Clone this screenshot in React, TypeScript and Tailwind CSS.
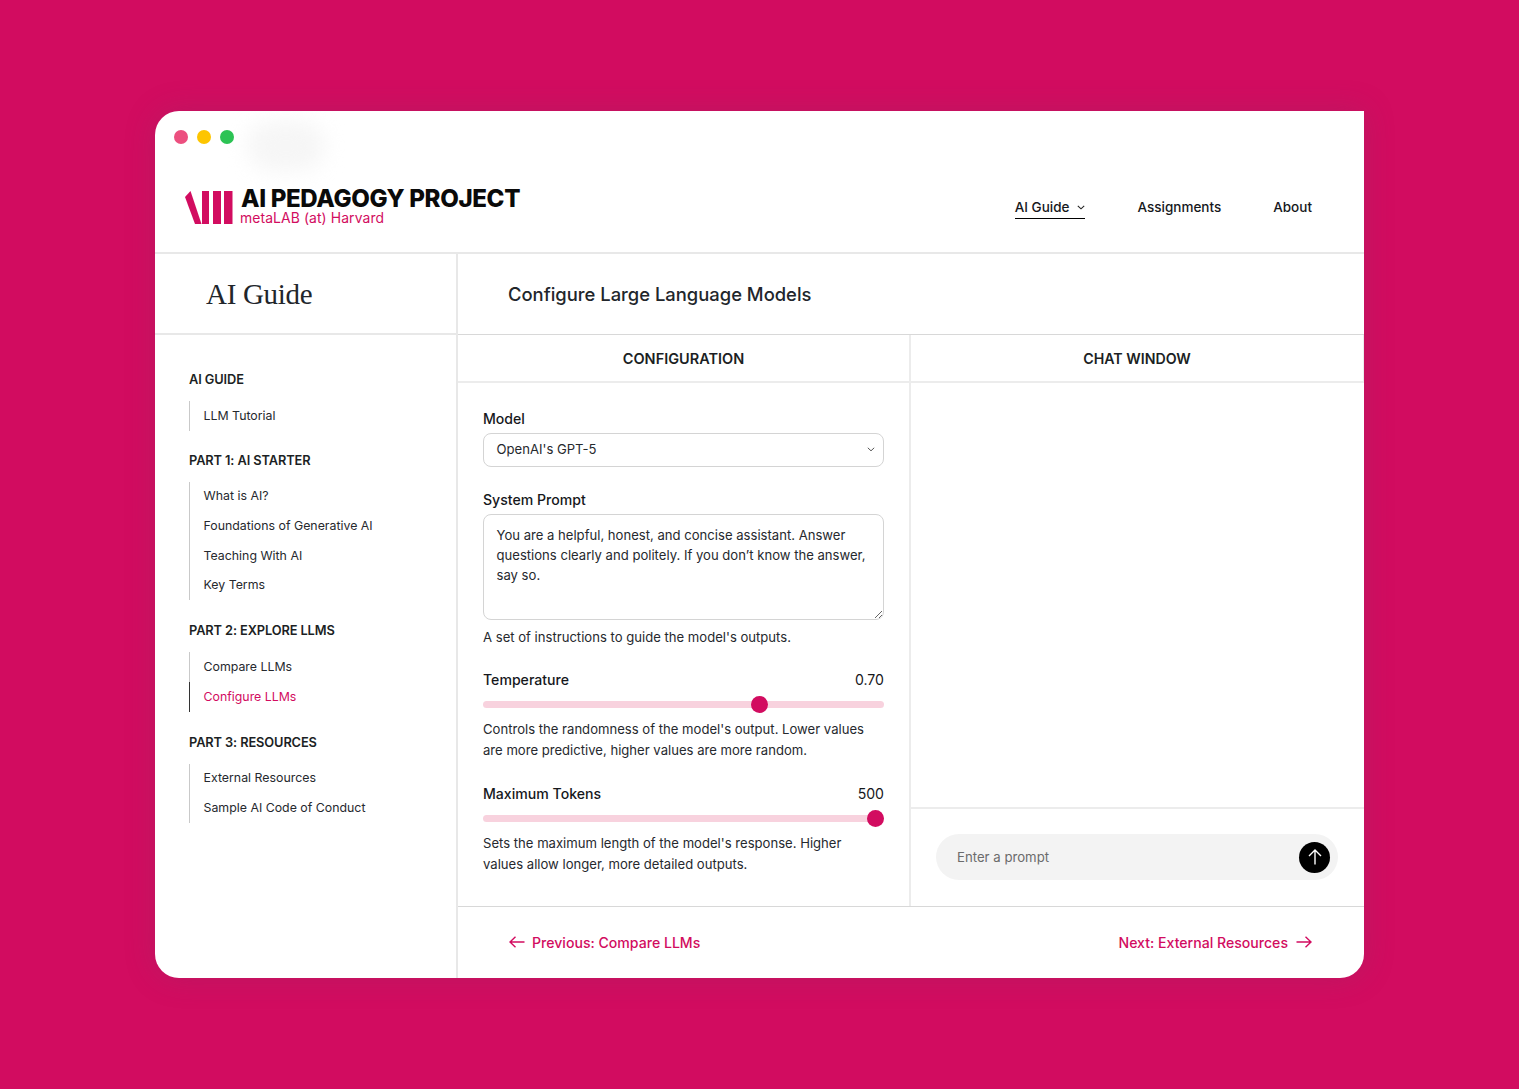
const font = "[font-family:Inter,'Liberation_Sans',sans-serif]";

function Logo() {
  return (
    <svg width="48" height="33" viewBox="0 0 48 33" className="shrink-0">
      <path d="M0 6 L5.5 0 L16.5 33 L10 33 Z" fill="#d20c60" />
      <rect x="17" y="0" width="7" height="33" fill="#d20c60" />
      <rect x="28" y="0" width="8" height="33" fill="#d20c60" />
      <rect x="39" y="0" width="8.5" height="33" fill="#d20c60" />
    </svg>
  );
}

function Group({ title, items, active, className }: { title: string; items: string[]; active?: string; className?: string }) {
  return (
    <div className={className}>
      <div className="text-[12.8px] leading-[16px] font-semibold text-[#1c1f24] tracking-[-0.1px]">{title}</div>
      <div className="mt-[13px] border-l border-[#c9c9c9] relative">
        {items.map((item) => (
          <div
            key={item}
            className={`h-[29.67px] flex items-center pl-[13.5px] text-[12.35px] ${item === active ? "text-[#d20c60] border-l border-[#333] -ml-px" : "text-[#26292e]"}`}
          >
            {item}
          </div>
        ))}
      </div>
    </div>
  );
}

function Slider({ label, value, percent, help, className }: { label: string; value: string; percent: number; help: string[]; className?: string }) {
  return (
    <div className={className}>
      <div className="flex justify-between text-[14.1px] leading-[20px] font-medium text-[#16181c]">
        <span>{label}</span>
        <span className="font-normal">{value}</span>
      </div>
      <div className="relative mt-[11px] h-[7px] rounded-full bg-[#f8d2de]">
        <div
          className="absolute top-[-5.5px] w-[17px] h-[17px] rounded-full bg-[#d20c60]"
          style={{ left: `calc(${percent}% - ${(17 * percent) / 100}px)` }}
        />
      </div>
      <div className="mt-[11px] text-[13.1px] leading-[21px] text-[#26292e]">
        {help.map((line) => (
          <div key={line} className="whitespace-nowrap">{line}</div>
        ))}
      </div>
    </div>
  );
}

export default function App() {
  return (
    <div className={`h-[1089px] w-full bg-[#d20c60] pt-[111px] pl-[155px] ${font}`}>
      <div className="relative w-[1209px] h-[867px] bg-white rounded-tl-[24px] rounded-b-[24px] overflow-hidden flex flex-col shadow-[0_0_30px_rgba(120,60,100,0.25)]">
        <div className="absolute left-[92px] top-[10px] w-[78px] h-[50px] rounded-full bg-[#f6f6f6] blur-[10px]" />
        <div className="absolute left-[19px] top-[19px] flex gap-[9px]">
          <div className="w-[14px] h-[14px] rounded-full bg-[#ec4f7f]" />
          <div className="w-[14px] h-[14px] rounded-full bg-[#fdc500]" />
          <div className="w-[14px] h-[14px] rounded-full bg-[#2cc354]" />
        </div>

        <header className="relative h-[143px] shrink-0 border-b-2 border-[#e8e8e8] flex items-start pt-[80px] pl-[30px] pr-[52px]">
          <Logo />
          <div className="ml-[8px] -mt-[3px]">
            <div className="text-[24.1px] leading-[22px] font-extrabold text-[#0a0a0a] tracking-[-0.35px] whitespace-nowrap">AI PEDAGOGY PROJECT</div>
            <div className="-ml-px mt-[1px] text-[13.9px] leading-[14px] text-[#d20c60] tracking-[0.1px] whitespace-nowrap">metaLAB (at) Harvard</div>
          </div>
          <nav className="ml-auto flex items-start gap-[52px] text-[13.5px] font-medium text-[#16181c] mt-[5px]">
            <div className="flex items-center gap-[8px] h-[23px] border-b border-black">
              AI Guide
              <svg width="8" height="5" viewBox="0 0 8 5" fill="none" stroke="#222" strokeWidth="1.1"><path d="M0.8 0.8 L4 3.8 L7.2 0.8" /></svg>
            </div>
            <div className="h-[23px] flex items-center pb-[1px]">Assignments</div>
            <div className="h-[23px] flex items-center pb-[1px]">About</div>
          </nav>
        </header>

        <div className="flex-1 flex min-h-0">
          <aside className="w-[303px] shrink-0 border-r-2 border-[#e8e8e8] flex flex-col">
            <div className="h-[81px] shrink-0 border-b-2 border-[#e8e8e8] flex items-center pl-[51px] pt-[2px] [font-family:'Liberation_Serif',serif] text-[29px] tracking-[-0.3px] text-[#22262b]">
              AI Guide
            </div>
            <div className="pl-[34px] pt-[37px]">
              <Group title="AI GUIDE" items={["LLM Tutorial"]} />
              <Group className="mt-[22px]" title="PART 1: AI STARTER" items={["What is AI?", "Foundations of Generative AI", "Teaching With AI", "Key Terms"]} />
              <Group className="mt-[23px]" title="PART 2: EXPLORE LLMS" items={["Compare LLMs", "Configure LLMs"]} active="Configure LLMs" />
              <Group className="mt-[23px]" title="PART 3: RESOURCES" items={["External Resources", "Sample AI Code of Conduct"]} />
            </div>
          </aside>

          <main className="flex-1 min-w-0 flex flex-col">
            <div className="h-[81px] shrink-0 border-b border-[#d8d8d8] flex items-center pl-[50px] pt-[1px] text-[18.4px] font-medium text-[#22262b]">
              Configure Large Language Models
            </div>
            <div className="flex-1 min-h-0 flex">
              <section className="w-[453px] shrink-0 border-r-2 border-[#ececec] flex flex-col">
                <div className="h-[48px] shrink-0 border-b-2 border-[#ececec] flex items-center justify-center pt-[1px] text-[14.5px] font-semibold text-[#1c1f24]">CONFIGURATION</div>
                <div className="px-[25px] pt-[26px]">
                  <div className="text-[14.1px] leading-[20px] font-medium text-[#16181c]">Model</div>
                  <div className="mt-[4px] h-[34px] rounded-[8px] border border-[#d4d4d4] flex items-center justify-between pl-[12.5px] pr-[8px] pb-[1px] text-[13.1px] text-[#26292e]">
                    OpenAI's GPT-5
                    <svg width="8" height="5" viewBox="0 0 8 5" fill="none" stroke="#555" strokeWidth="1"><path d="M0.8 0.8 L4 3.8 L7.2 0.8" /></svg>
                  </div>
                  <div className="mt-[23px] text-[14.1px] leading-[20px] font-medium text-[#16181c]">System Prompt</div>
                  <textarea
                    readOnly
                    className="mt-[4px] block w-full h-[106px] rounded-[8px] border border-[#d4d4d4] pl-[12.5px] pr-[8px] pt-[10px] text-[13.1px] leading-[20px] text-[#26292e] outline-none"
                    value={"You are a helpful, honest, and concise assistant. Answer questions clearly and politely. If you don’t know the answer, say so."}
                  />
                  <div className="mt-[7px] text-[13.1px] leading-[20px] text-[#26292e]">A set of instructions to guide the model's outputs.</div>
                  <Slider className="mt-[23px]" label="Temperature" value="0.70" percent={69.8} help={["Controls the randomness of the model's output. Lower values", "are more predictive, higher values are more random."]} />
                  <Slider className="mt-[23px]" label="Maximum Tokens" value="500" percent={100} help={["Sets the maximum length of the model's response. Higher", "values allow longer, more detailed outputs."]} />
                </div>
              </section>
              <section className="flex-1 min-w-0 flex flex-col">
                <div className="h-[48px] shrink-0 border-b-2 border-r border-[#ececec] flex items-center justify-center pt-[1px] text-[14.2px] font-semibold text-[#1c1f24]">CHAT WINDOW</div>
                <div className="flex-1" />
                <div className="h-[99px] shrink-0 border-t-2 border-[#ececec] pt-[25px] pl-[25px] pr-[26px]">
                  <div className="h-[46px] rounded-full bg-[#f3f3f3] flex items-center justify-between pl-[21px] pr-[8px] text-[13.2px] text-[#6b6b6b]">
                    <span className="mt-[2px]">Enter a prompt</span>
                    <div className="w-[31px] h-[31px] rounded-full bg-black flex items-center justify-center">
                      <svg width="14" height="16" viewBox="0 0 14 16" fill="none" stroke="white" strokeWidth="1.4"><path d="M7 15.5 V1.2 M1 7 L7 1 L13 7" /></svg>
                    </div>
                  </div>
                </div>
              </section>
            </div>
            <div className="h-[72px] shrink-0 border-t border-[#d8d8d8] flex items-center justify-between pl-[51px] pr-[52px] text-[14.1px] font-medium text-[#d20c60]">
              <div className="flex items-center gap-[7px]">
                <svg width="16" height="12" viewBox="0 0 16 12" fill="none" stroke="#d20c60" strokeWidth="1.4"><path d="M15.5 6 H1 M6.5 0.8 L1 6 L6.5 11.2" /></svg>
                Previous: Compare LLMs
              </div>
              <div className="flex items-center gap-[8px]">
                Next: External Resources
                <svg width="16" height="12" viewBox="0 0 16 12" fill="none" stroke="#d20c60" strokeWidth="1.4"><path d="M0.5 6 H15 M9.5 0.8 L15 6 L9.5 11.2" /></svg>
              </div>
            </div>
          </main>
        </div>
      </div>
    </div>
  );
}
